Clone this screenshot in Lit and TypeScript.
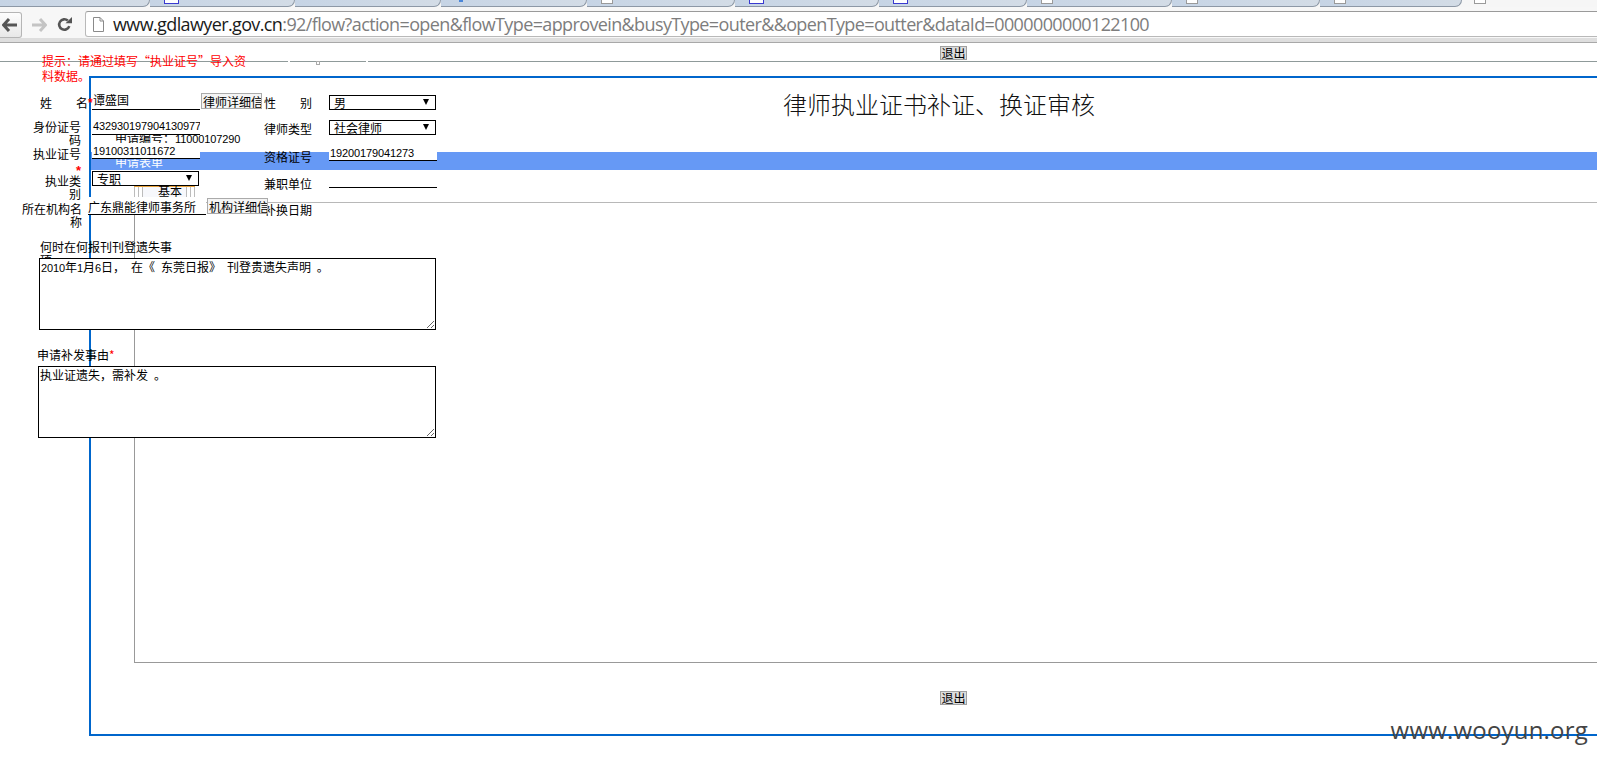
import { LitElement, html, css } from "lit";
import { customElement } from "lit/decorators.js";

const TABS = [
  { w: 150, fav: "" },
  { w: 145, fav: "blue" },
  { w: 146, fav: "" },
  { w: 146, fav: "dot" },
  { w: 148, fav: "doc" },
  { w: 144, fav: "blue" },
  { w: 148, fav: "blue" },
  { w: 145, fav: "doc" },
  { w: 148, fav: "doc" },
  { w: 142, fav: "doc" },
];

@customElement("app-root")
export class AppRoot extends LitElement {
  static styles = css`
    :host {
      display: block;
      width: 1597px;
      height: 761px;
      overflow: hidden;
      background: #fff;
      font-family: "Noto Sans CJK SC", "Liberation Sans", sans-serif;
      font-size: 12px;
      line-height: 13px;
      color: #000;
    }
    /* browser chrome */
    .tabs { display: flex; height: 7px; background: #f6f6f6; overflow: hidden; }
    .tab {
      flex: none;
      background: linear-gradient(90deg, #c6d4e5, #d3dce6);
      border-right: 1px solid #8d98a6; border-bottom: 1px solid #8d98a6;
      border-bottom-right-radius: 7px;
      display: flex; padding-left: 14px; box-sizing: border-box; height: 7px;
    }
    .fav { width: 10px; height: 3px; border: 1px solid #9a9a9a; border-top: 0; background: #fff; }
    .fav.blue { width: 13px; border-color: #3a3ad0; }
    .fav.dot { width: 4px; height: 2px; border: 0; background: #4a86d8; margin-left: 4px; }
    .active-fav { margin-left: 12px; width: 10px; height: 3px; border: 1px solid #9a9a9a; border-top: 0; background: #fff; }
    .toolbar {
      padding-top: 4px; box-sizing: border-box;
      display: flex; align-items: stretch; background: #f7f7f7;
      overflow: hidden; height: 31px;
    }
    .back {
      flex: none; width: 23px; height: 26px; box-sizing: border-box; margin-left: -1px; margin-top: 1px;
      border: 1px solid #b5b5b5; border-left: 0; border-radius: 0 3px 3px 0;
      background: linear-gradient(#fdfdfd, #e8e8e8);
      display: flex; align-items: center; justify-content: center;
    }
    .tool { flex: none; display: flex; align-items: center; justify-content: center; }
    .fwd { width: 27px; margin-left: 4px; }
    .reload { width: 20px; margin-left: 1px; }
    .url {
      flex: none; margin-left: 11px; width: 1600px; height: 26px; box-sizing: border-box;
      background: #fff; border: 1px solid #b9b9b9; border-top-color: #9a9a9a; border-radius: 3px 0 0 3px;
      display: flex; align-items: center; padding-left: 7px;
      font-family: "Open Sans", sans-serif; font-size: 18px; color: #7d7d7d; white-space: nowrap;
      letter-spacing: -0.62px;
    }
    .url svg { margin-right: 9px; flex: none; }
    .url b { font-weight: 400; color: #1a1a1a; }
    .chrome-foot { height: 5px; background: #dedede; border-bottom: 1px solid #a8a8a8; box-sizing: border-box; }

    /* page */
    .page { position: relative; height: 718px; overflow: hidden; }
    .topbar { position: relative; height: 19px; box-sizing: border-box; border-bottom: 1px solid #8f9a9a; padding: 3px 0 0 940px; }
    .gap { position: absolute; top: 18px; width: 2px; height: 1px; background: #fff; }
    .gap.a { left: 288px; }
    .gap.b { left: 366px; }
    .sq { position: absolute; left: 316px; top: 18px; width: 2px; height: 2px; border: 1px solid #aaa; background: #fff; }
    .exit {
      display: block; width: 27px; height: 14px; padding: 0; box-sizing: border-box;
      border: 1px solid #a0a0a0; background: #dcdcdc; color: #000;
      font: inherit; line-height: 12px; text-align: center;
    }
    .frame {
      margin: 14px 0 0 89px; width: 1700px; height: 660px; box-sizing: border-box;
      border: 2px solid #0066cc; border-right: 0;
    }
    .title {
      margin: 14px 0 0 692px; height: 26px; line-height: 24px; font-size: 24px; font-weight: 300;
      white-space: nowrap; color: #111;
    }
    .serial { margin: 16px 0 0 24px; height: 12px; line-height: 8px; white-space: pre; }
    .bar {
      margin-top: 6px; height: 18px; background: #6699f5; color: #fff;
      padding: 3px 0 0 24px; box-sizing: border-box; overflow: hidden;
    }
    .tabstrip { margin: 16px 0 0 43px; height: 16px; display: flex; }
    .edge { width: 9px; height: 12px; background: repeating-linear-gradient(90deg, #bcbcbc 0 1px, transparent 1px 4px); }
    .mid { width: 43px; box-sizing: border-box; padding-left: 15px; height: 12px; line-height: 7px; background: #f7f8fc; }
    .strip-top { border-top: 1px solid #e8a33d; display: flex; height: 14px; box-sizing: border-box; width: 61px; }
    .field {
      margin-left: 43px; height: 461px; box-sizing: border-box;
      border: 1px solid #999; border-top-color: #b8b8b8; border-right: 0;
    }
    .frame .exit { margin: 28px 0 0 849px; }

    .hint { position: absolute; left: 42px; top: 10px; width: 205px; line-height: 15px; color: #f00; }
    .mark {
      position: absolute; right: 9px; top: 672px;
      font-family: "Open Sans", sans-serif; font-size: 24px; line-height: 30px; color: #444;
      letter-spacing: 0.2px;
    }

    /* form lying over the frame */
    .form { position: absolute; left: 0; top: 50px; }
    .row { display: grid; grid-template-columns: 264px 180px; }
    .r1 { height: 27px; }
    .r2 { height: 23px; }
    .r3 { height: 28px; }
    .r4 { height: 26px; }
    .r5 { height: 43px; }
    .cell { display: flex; align-items: flex-start; }
    .lb { flex: none; text-align: right; }
    .even { width: 48px; text-align: justify; text-align-last: justify; }
    .w48 { width: 48px; }
    .w36 { width: 36px; }
    .w60 { width: 60px; }
    .ml22 { margin-left: 22px; }
    .ml33 { margin-left: 33px; }
    .ml40 { margin-left: 40px; }
    .ml45 { margin-left: 45px; }
    .t1 { margin-top: 1px; }
    .t2 { margin-top: 2px; }
    .t3 { margin-top: 3px; }
    .t4 { margin-top: 4px; }
    .t5 { margin-top: 5px; }
    .t6 { margin-top: 6px; }
    .t7 { margin-top: 7px; }
    .red { color: #f00; }
    .low { vertical-align: -3px; font-family: "Liberation Sans", sans-serif; font-weight: 700; font-size: 13px; line-height: 13px; }
    .star { flex: none; width: 4px; color: #f00; font-family: "Liberation Sans", sans-serif; font-weight: 700; position: relative; z-index: 1; }
    .mono { font-family: "Liberation Sans", sans-serif; font-size: 11px; letter-spacing: -0.12px; word-spacing: 3px; }
    .inp {
      flex: none; width: 108px; height: 15px; box-sizing: border-box; background: #fff;
      border-bottom: 1px solid #000; padding-left: 1px; white-space: nowrap; overflow: hidden;
    }
    .inp.mono { line-height: 12px; }
    .tall { height: 16px; }
    .up { line-height: 11px; }
    .pt2 { padding-top: 2px; }
    .pt1 { padding-top: 1px; }
    .gapl { margin-left: 11px; }
    .rgap { margin-left: 17px; }
    .org { width: 118px; height: 18px; margin-left: 6px; padding: 3px 0 0 0; }
    .sel {
      flex: none; width: 107px; height: 15px; box-sizing: border-box; background: #fff;
      border: 1px solid #000; padding-left: 4px; line-height: 13px; position: relative; overflow: hidden;
    }
    .sel::after {
      content: ""; position: absolute; right: 6px; top: 3px;
      border-left: 3.5px solid transparent; border-right: 3.5px solid transparent; border-top: 6px solid #000;
    }
    .detail {
      flex: none; width: 61px; height: 16px; margin-left: 1px; padding: 0 0 0 1px; box-sizing: border-box;
      border: 1px solid #aaa; background: #f4f4f4; color: #000;
      font: inherit; line-height: 13px; text-align: left; white-space: nowrap; overflow: hidden;
      position: relative; z-index: 1;
    }
    .q { margin-left: 40px; width: 132px; height: 18px; }
    .q.two { margin: 18px 0 0 37px; width: 90px; }
    .ta {
      position: relative; box-sizing: border-box; height: 72px; margin-left: 39px; width: 397px;
      background: #fff; border: 1px solid #000; padding: 1px 1px; white-space: pre; overflow: auto; resize: both;
    }
    .ta.second { margin-left: 38px; width: 398px; }
  `;

  render() {
    const m = (t: string) => html`<span class="mono">${t}</span>`;
    return html`
      <div class="tabs">
        ${TABS.map(
          (t) => html`<div class="tab" style="width:${t.w}px">
            ${t.fav ? html`<span class="fav ${t.fav}"></span>` : ""}
          </div>`
        )}
        <span class="active-fav"></span>
      </div>
      <div class="toolbar">
        <div class="back">
          <svg width="16" height="14" viewBox="0 0 16 14"><path d="M7 1 1.5 7 7 13M2 7h13" fill="none" stroke="#555" stroke-width="3"/></svg>
        </div>
        <div class="tool fwd">
          <svg width="15" height="14" viewBox="0 0 15 14"><path d="M8 1 13.5 7 8 13M13 7H0" fill="none" stroke="#c4c4c4" stroke-width="3"/></svg>
        </div>
        <div class="tool reload">
          <svg width="15" height="15" viewBox="0 0 15 15"><path d="M12.3 9.2A5.2 5.2 0 1 1 10.8 3.6" fill="none" stroke="#555" stroke-width="2.6"/><path d="M8.5 6.3H15V0Z" fill="#555"/></svg>
        </div>
        <div class="url">
          <svg width="11" height="15" viewBox="0 0 11 15"><path d="M.5.5h6.5l3.5 3.5v10.5H.5ZM7 .5V4h3.5" fill="#fff" stroke="#8a8a8a"/></svg>
          <span><b>www.gdlawyer.gov.cn</b>:92/flow?action=open&amp;flowType=approvein&amp;busyType=outer&amp;&amp;openType=outter&amp;dataId=0000000000122100</span>
        </div>
      </div>
      <div class="chrome-foot"></div>

      <div class="page">
        <div class="topbar">
          <button class="exit">退出</button>
          <span class="gap a"></span><span class="gap b"></span><span class="sq"></span>
        </div>
        <div class="frame">
          <div class="title">律师执业证书补证、换证审核</div>
          <div class="serial">申请编号：${m("11000107290")}</div>
          <div class="bar">申请表单</div>
          <div class="tabstrip">
            <div class="strip-top">
              <span class="edge"></span><span class="mid">基本</span><span class="edge"></span>
            </div>
          </div>
          <div class="field"></div>
          <button class="exit">退出</button>
        </div>

        <div class="form">
          <div class="row r1">
            <div class="cell">
              <span class="lb even ml40 t3">姓 名</span><span class="star t4">*</span>
              <div class="inp tall up t1">谭盛国</div>
              <button class="detail">律师详细信息</button>
            </div>
            <div class="cell">
              <span class="lb even t3">性 别</span>
              <div class="sel t2 rgap">男</div>
            </div>
          </div>
          <div class="row r2">
            <div class="cell">
              <span class="lb w48 ml33">身份证号码</span>
              <div class="inp mono gapl">432930197904130977</div>
            </div>
            <div class="cell">
              <span class="lb w48 t2">律师类型</span>
              <div class="sel rgap">社会律师</div>
            </div>
          </div>
          <div class="row r3">
            <div class="cell">
              <span class="lb w48 ml33 t4">执业证号<span class="red low">*</span></span>
              <div class="inp tall mono pt2 gapl">19100311011672</div>
            </div>
            <div class="cell">
              <span class="lb w48 t7">资格证号</span>
              <div class="inp mono pt1 rgap t3">19200179041273</div>
            </div>
          </div>
          <div class="row r4">
            <div class="cell">
              <span class="lb w36 ml45 t3">执业类别</span>
              <div class="sel gapl">专职</div>
            </div>
            <div class="cell">
              <span class="lb w48 t6">兼职单位</span>
              <div class="inp tall rgap t1"></div>
            </div>
          </div>
          <div class="row r5">
            <div class="cell">
              <span class="lb w60 ml22 t5">所在机构名称</span>
              <div class="inp org">广东鼎能律师事务所</div>
              <button class="detail t1">机构详细信息</button>
            </div>
            <div class="cell">
              <span class="lb w48 t6">补换日期</span>
            </div>
          </div>
          <div class="q">何时在何报刊刊登遗失事项</div>
          <div class="ta">${m("2010")}年${m("1")}月${m("6")}日，${m(" ")}在《${m(" ")}东莞日报》${m(" ")}刊登贵遗失声明${m(" ")}。</div>
          <div class="q two">申请补发事由<span class="red">*</span></div>
          <div class="ta second">执业证遗失，需补发${m(" ")}。</div>
        </div>

        <div class="hint">提示：请通过填写“执业证号”导入资料数据。</div>
        <div class="mark">www.wooyun.org</div>
      </div>
    `;
  }
}
